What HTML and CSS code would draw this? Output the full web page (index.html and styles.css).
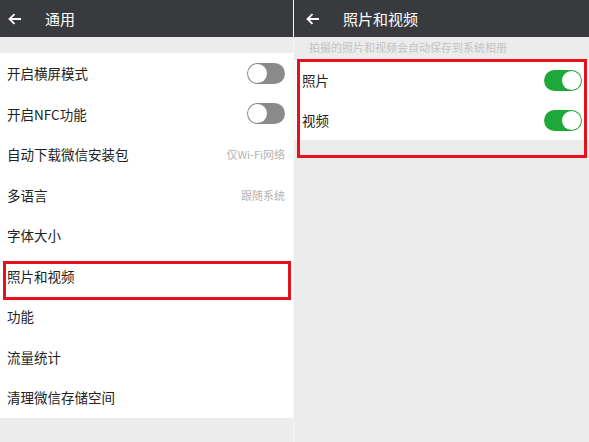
FILE: index.html
```html
<!DOCTYPE html>
<html>
    <head>
        <title>通用 / 照片和视频</title>
        <meta name='viewport' content='width=device-width, initial-scale=1.0'>
        <link rel="stylesheet" href="styles.css">
    </head>
    <body>
        <div class='screens'>
            <div class='panel'>
                <header>
                    <svg class='back' width='14' height='12' viewBox='0 0 14 12'>
                        <path d='M13 6H2M6.5 1.2L1.5 6l5 4.8' fill='none' stroke='#fff' stroke-width='1.8'/>
                    </svg>
                    <h1>通用</h1>
                </header>
                <div class='gap'></div>
                <ul class='list'>
                    <li><span>开启横屏模式</span><span class='switch'></span></li>
                    <li><span>开启NFC功能</span><span class='switch'></span></li>
                    <li><span>自动下载微信安装包</span><span class='value'>仅Wi-Fi网络</span></li>
                    <li><span>多语言</span><span class='value'>跟随系统</span></li>
                    <li><span>字体大小</span></li>
                    <li><span>照片和视频</span></li>
                    <li><span>功能</span></li>
                    <li><span>流量统计</span></li>
                    <li><span>清理微信存储空间</span></li>
                </ul>
                <div class='mark mark-left'></div>
            </div>
            <div class='panel'>
                <header>
                    <svg class='back' width='14' height='12' viewBox='0 0 14 12'>
                        <path d='M13 6H2M6.5 1.2L1.5 6l5 4.8' fill='none' stroke='#fff' stroke-width='1.8'/>
                    </svg>
                    <h1>照片和视频</h1>
                </header>
                <p class='hint'>拍摄的照片和视频会自动保存到系统相册</p>
                <ul class='list short'>
                    <li><span>照片</span><span class='switch on'></span></li>
                    <li><span>视频</span><span class='switch on'></span></li>
                </ul>
                <div class='mark mark-right'></div>
            </div>
        </div>
    </body>
</html>
```
FILE: styles.css
```css
* {
    margin: 0;
    padding: 0;
    box-sizing: border-box;
}

body {
    background: #ececec;
    font-family: "Noto Sans CJK SC", "Noto Sans", sans-serif;
    color: #222;
}

.screens {
    display: grid;
    grid-template-columns: 294px 295px;
    column-gap: 0;
    width: 589px;
    height: 442px;
    overflow: hidden;
}

.panel {
    position: relative;
    background: #ececec;
    border-right: 1px solid #f6f6f6;
}

.panel:last-child {
    border-right: none;
}

header {
    height: 37px;
    background: #393a3e;
    display: flex;
    align-items: center;
    padding-left: 8px;
}

.panel:last-child header {
    padding-left: 12px;
}

header h1 {
    color: white;
    font-size: 15px;
    font-weight: 400;
    margin-left: 23px;
}

.gap {
    height: 16px;
}

.list {
    list-style: none;
    background: white;
}

.list li {
    height: 40.5px;
    display: flex;
    align-items: center;
    justify-content: space-between;
    padding: 0 8px 0 7px;
    font-size: 13.5px;
}

.short li {
    height: 40px;
    padding-left: 8px;
    padding-right: 7px;
}

.value {
    color: #b4b4b4;
    font-size: 11px;
}

.switch {
    position: relative;
    width: 38px;
    height: 21px;
    border-radius: 11px;
    background: #8a8a8a;
}

.switch::after {
    content: '';
    position: absolute;
    top: 1px;
    left: 1px;
    width: 19px;
    height: 19px;
    border-radius: 50%;
    background: white;
}

.switch.on {
    background: #1ea839;
}

.switch.on::after {
    left: 18px;
}

.hint {
    height: 23px;
    padding-left: 15px;
    line-height: 21px;
    font-size: 11px;
    color: #c4c4c4;
}

.mark {
    position: absolute;
    border: 3px solid #e8101a;
}

.mark-left {
    top: 261px;
    left: 3px;
    width: 288px;
    height: 39px;
}

.mark-right {
    top: 59px;
    left: 3px;
    width: 290px;
    height: 99px;
}
```
